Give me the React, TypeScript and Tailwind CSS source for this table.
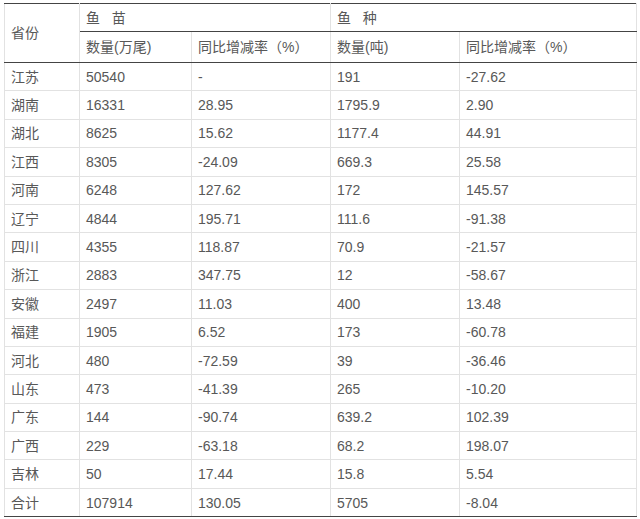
import React from "react";

const rows: [string, string, string, string, string][] = [
  ["江苏", "50540", "-", "191", "-27.62"],
  ["湖南", "16331", "28.95", "1795.9", "2.90"],
  ["湖北", "8625", "15.62", "1177.4", "44.91"],
  ["江西", "8305", "-24.09", "669.3", "25.58"],
  ["河南", "6248", "127.62", "172", "145.57"],
  ["辽宁", "4844", "195.71", "111.6", "-91.38"],
  ["四川", "4355", "118.87", "70.9", "-21.57"],
  ["浙江", "2883", "347.75", "12", "-58.67"],
  ["安徽", "2497", "11.03", "400", "13.48"],
  ["福建", "1905", "6.52", "173", "-60.78"],
  ["河北", "480", "-72.59", "39", "-36.46"],
  ["山东", "473", "-41.39", "265", "-10.20"],
  ["广东", "144", "-90.74", "639.2", "102.39"],
  ["广西", "229", "-63.18", "68.2", "198.07"],
  ["吉林", "50", "17.44", "15.8", "5.54"],
  ["合计", "107914", "130.05", "5705", "-8.04"],
];

export default function App() {
  const cell = "border border-[#e2e2e2] pl-[6px] align-middle font-normal text-left";
  return (
    <div
      className="w-[640px] h-[519px] bg-white pt-[3px] pl-[4px]"
      style={{ fontFamily: '"Liberation Sans", "Noto Sans CJK SC", sans-serif' }}
    >
      <table className="border-collapse table-fixed w-[632px] text-[14px] text-[#585858] leading-none">
        <colgroup>
          <col className="w-[75px]" />
          <col className="w-[112px]" />
          <col className="w-[139px]" />
          <col className="w-[129px]" />
          <col className="w-[177px]" />
        </colgroup>
        <thead>
          <tr className="h-[28px]">
            <th rowSpan={2} className={`${cell} border-t-[#444] border-b-[#444]`}>省份</th>
            <th colSpan={2} className={`${cell} border-t-[#444] border-b-[#444]`}>鱼&nbsp;&nbsp;&nbsp;苗</th>
            <th colSpan={2} className={`${cell} border-t-[#444] border-b-[#444]`}>鱼&nbsp;&nbsp;&nbsp;种</th>
          </tr>
          <tr className="h-[31px]">
            <th className={`${cell} border-b-[#444]`}>数量(万尾)</th>
            <th className={`${cell} border-b-[#444]`}>同比增减率（%）</th>
            <th className={`${cell} border-b-[#444]`}>数量(吨)</th>
            <th className={`${cell} border-b-[#444]`}>同比增减率（%）</th>
          </tr>
        </thead>
        <tbody>
          {rows.map((r, i) => (
            <tr key={r[0]} className="h-[28.4px]">
              {r.map((c, j) => (
                <td
                  key={j}
                  className={`${cell} ${i === rows.length - 1 ? "border-b-[#444]" : ""}`}
                >
                  {c}
                </td>
              ))}
            </tr>
          ))}
        </tbody>
      </table>
    </div>
  );
}
